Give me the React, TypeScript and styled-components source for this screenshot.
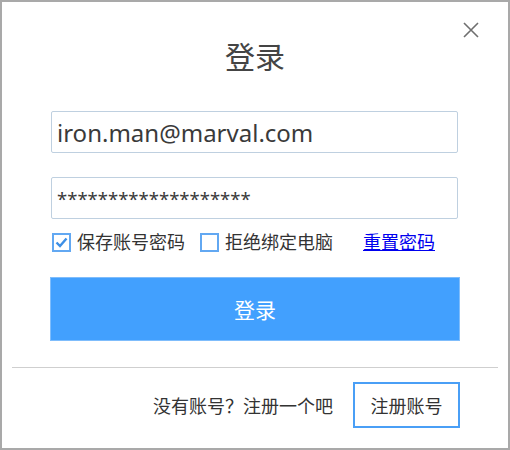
import React from "react";
import styled, { createGlobalStyle } from "styled-components";

const GlobalStyle = createGlobalStyle`
  html, body {
    margin: 0;
    padding: 0;
    background: #fff;
  }
  * {
    box-sizing: border-box;
  }
`;

const FONT = `"Noto Sans", "Noto Sans CJK SC", sans-serif`;

const Dialog = styled.div`
  position: relative;
  width: 510px;
  height: 450px;
  border: 2px solid #a9a9a9;
  background: #fff;
  font-family: ${FONT};
  color: #333;
  padding-top: 35px;
  display: flex;
  flex-direction: column;
`;

const CloseBtn = styled.button`
  position: absolute;
  top: 20px;
  right: 29px;
  width: 16px;
  height: 16px;
  padding: 0;
  border: none;
  background: transparent;
  cursor: pointer;
  display: flex;
`;

const Title = styled.h1`
  margin: 0;
  height: 40px;
  line-height: 40px;
  font-size: 30px;
  font-weight: normal;
  text-align: center;
  color: #444;
`;

const Form = styled.div`
  display: flex;
  flex-direction: column;
  padding: 0 48px;
  margin-top: 34px;
`;

const Field = styled.input<{ $small?: boolean }>`
  height: 42px;
  margin: 0 2px 0 1px;
  border: 1px solid #bfd0e0;
  border-radius: 2px;
  padding: 0 5px;
  font-family: ${FONT};
  font-size: ${(p) => (p.$small ? "18.5px" : "24px")};
  color: #3a3a3a;
  outline: none;
  & + & {
    margin-top: 24px;
  }
`;

const Options = styled.div`
  display: flex;
  align-items: center;
  height: 20px;
  margin-top: 13px;
  padding-left: 2px;
  font-size: 18px;
`;

const CheckLabel = styled.label`
  display: flex;
  align-items: center;
  gap: 6px;
  margin-right: 15px;
  cursor: pointer;
  color: #333;
  line-height: 20px;
`;

const Box = styled.span`
  width: 19px;
  height: 19px;
  border: 2px solid #62a8f2;
  background: #fff;
  display: flex;
  align-items: center;
  justify-content: center;
`;

const Link = styled.a`
  margin-left: 15px;
  color: #0000ee;
  text-decoration: underline;
  line-height: 20px;
  cursor: pointer;
`;

const Submit = styled.button`
  margin-top: 25px;
  height: 64px;
  border: 1px solid #7fbdfc;
  background: #42a0fe;
  color: #fff;
  font-family: ${FONT};
  font-size: 21px;
  cursor: pointer;
`;

const Divider = styled.hr`
  margin: 26px 10px 0 10px;
  border: none;
  border-top: 1px solid #cfcfcf;
`;

const Footer = styled.div`
  display: flex;
  align-items: center;
  justify-content: flex-end;
  gap: 20px;
  padding-right: 48px;
  margin-top: 14px;
`;

const Hint = styled.span`
  font-size: 18px;
  color: #333;
`;

const Register = styled.button`
  width: 107px;
  height: 46px;
  border: 2px solid #4a9ff6;
  background: #fff;
  font-family: ${FONT};
  font-size: 18px;
  color: #333;
  cursor: pointer;
`;

const Check = ({ checked, label }: { checked?: boolean; label: string }) => (
  <CheckLabel>
    <Box>
      {checked && (
        <svg width="13" height="13" viewBox="0 0 13 13">
          <path d="M1.5 6.5 L5 10 L11.5 2.5" fill="none" stroke="#3d8fe6" strokeWidth="2.4" />
        </svg>
      )}
    </Box>
    {label}
  </CheckLabel>
);

export default function App() {
  return (
    <>
      <GlobalStyle />
      <Dialog>
        <CloseBtn aria-label="关闭">
          <svg width="16" height="16" viewBox="0 0 16 16">
            <path d="M1 1 L15 15 M15 1 L1 15" stroke="#6f6f6f" strokeWidth="1.6" />
          </svg>
        </CloseBtn>
        <Title>登录</Title>
        <Form>
          <Field type="text" defaultValue="iron.man@marval.com" />
          <Field type="text" $small defaultValue="*******************" />
          <Options>
            <Check checked label="保存账号密码" />
            <Check label="拒绝绑定电脑" />
            <Link>重置密码</Link>
          </Options>
          <Submit>登录</Submit>
        </Form>
        <Divider />
        <Footer>
          <Hint>没有账号？注册一个吧</Hint>
          <Register>注册账号</Register>
        </Footer>
      </Dialog>
    </>
  );
}
